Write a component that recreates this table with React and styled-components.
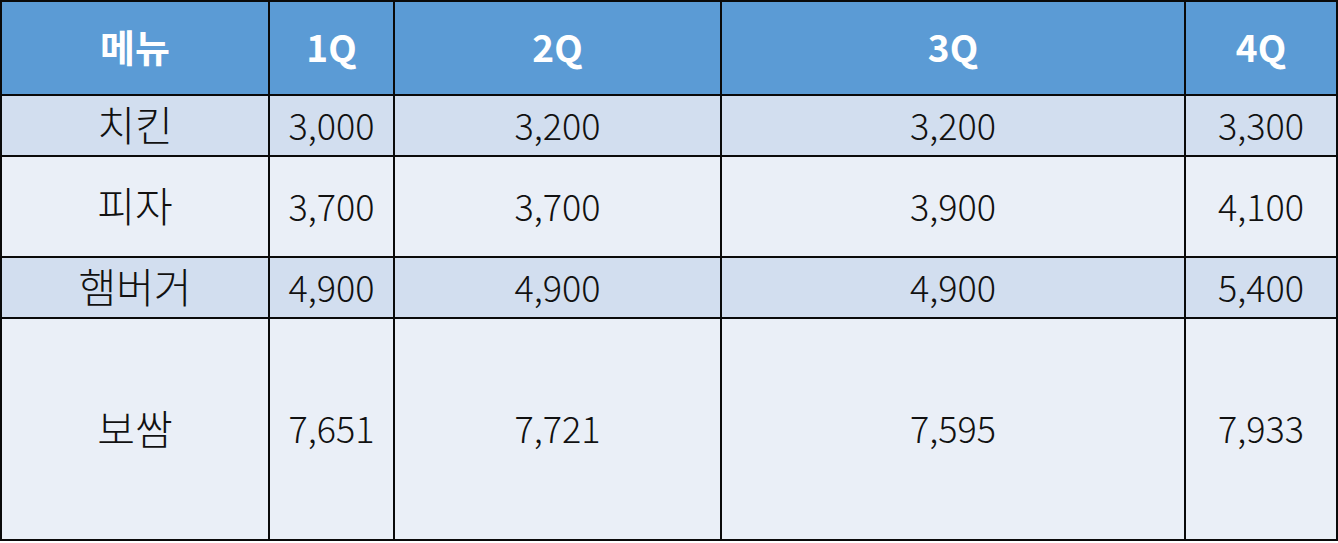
import styled, { createGlobalStyle } from "styled-components";

const GlobalStyle = createGlobalStyle`
  html, body {
    margin: 0;
    padding: 0;
    background: #ffffff;
  }
  body {
    font-family: "Noto Sans CJK KR", "Noto Sans", sans-serif;
  }
`;

const COLUMNS = [268, 125, 327, 464, 152];
const HEADERS = ["메뉴", "1Q", "2Q", "3Q", "4Q"];

const ROWS = [
  { name: "치킨", values: ["3,000", "3,200", "3,200", "3,300"], height: 61 },
  { name: "피자", values: ["3,700", "3,700", "3,900", "4,100"], height: 101 },
  { name: "햄버거", values: ["4,900", "4,900", "4,900", "5,400"], height: 61 },
  { name: "보쌈", values: ["7,651", "7,721", "7,595", "7,933"], height: 222 },
];

const Table = styled.table`
  width: 1336px;
  border-collapse: collapse;
  table-layout: fixed;
  border: 2px solid #0a0a0a;
`;

const HeadCell = styled.th`
  box-sizing: border-box;
  height: 94px;
  padding: 0 0 4px;
  background: #5b9bd5;
  color: #ffffff;
  font-size: ${({ $ko }) => ($ko ? 38 : 37)}px;
  font-weight: 700;
  line-height: 1;
  text-align: center;
  vertical-align: middle;
  border: 2px solid #0a0a0a;
`;

const Row = styled.tr`
  height: ${({ $h }) => $h}px;
  background: ${({ $band }) => ($band ? "#d2deef" : "#eaeff7")};
`;

const Cell = styled.td`
  padding: 0 0 4px;
  font-size: ${({ $ko }) => ($ko ? 41 : 36)}px;
  font-weight: 300;
  color: #111111;
  text-align: center;
  vertical-align: middle;
  border: 2px solid #0a0a0a;
  line-height: 1;
`;

export default function App() {
  return (
    <>
      <GlobalStyle />
      <Table>
        <colgroup>
          {COLUMNS.map((w, i) => (
            <col key={i} style={{ width: w }} />
          ))}
        </colgroup>
        <thead>
          <tr>
            {HEADERS.map((h, i) => (
              <HeadCell key={h} $ko={i === 0}>
                {h}
              </HeadCell>
            ))}
          </tr>
        </thead>
        <tbody>
          {ROWS.map((row, i) => (
            <Row key={row.name} $h={row.height} $band={i % 2 === 0}>
              <Cell $ko>{row.name}</Cell>
              {row.values.map((v, j) => (
                <Cell key={j}>{v}</Cell>
              ))}
            </Row>
          ))}
        </tbody>
      </Table>
    </>
  );
}
